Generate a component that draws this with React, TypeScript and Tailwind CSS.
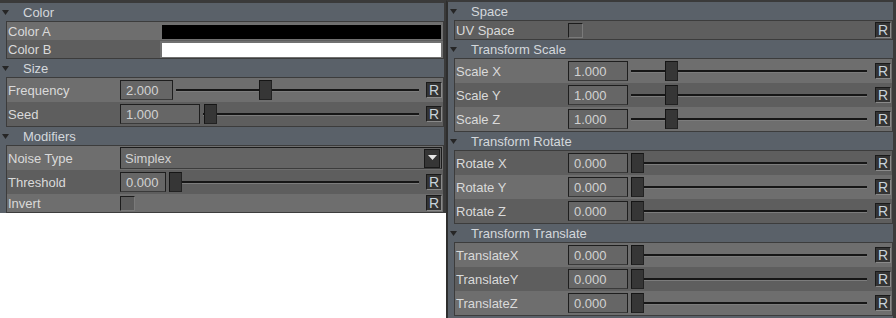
import React from "react";

type Tone = "light" | "dark";

type Row =
  | { kind: "color"; label: string; tone: Tone; swatch: string }
  | { kind: "slider"; label: string; tone: Tone; value: string; boxW: number; thumb: number }
  | { kind: "select"; label: string; tone: Tone; value: string }
  | { kind: "check"; label: string; tone: Tone };

type Section = { title: string; rows: Row[] };

const LEFT: Section[] = [
  {
    title: "Color",
    rows: [
      { kind: "color", label: "Color A", tone: "light", swatch: "bg-black" },
      { kind: "color", label: "Color B", tone: "dark", swatch: "bg-white" },
    ],
  },
  {
    title: "Size",
    rows: [
      { kind: "slider", label: "Frequency", tone: "light", value: "2.000", boxW: 53, thumb: 83 },
      { kind: "slider", label: "Seed", tone: "dark", value: "1.000", boxW: 80, thumb: 1 },
    ],
  },
  {
    title: "Modifiers",
    rows: [
      { kind: "select", label: "Noise Type", tone: "light", value: "Simplex" },
      { kind: "slider", label: "Threshold", tone: "dark", value: "0.000", boxW: 46, thumb: 0 },
      { kind: "check", label: "Invert", tone: "light" },
    ],
  },
];

const RIGHT: Section[] = [
  { title: "Space", rows: [{ kind: "check", label: "UV Space", tone: "dark" }] },
  {
    title: "Transform Scale",
    rows: [
      { kind: "slider", label: "Scale X", tone: "light", value: "1.000", boxW: 60, thumb: 34 },
      { kind: "slider", label: "Scale Y", tone: "dark", value: "1.000", boxW: 60, thumb: 34 },
      { kind: "slider", label: "Scale Z", tone: "light", value: "1.000", boxW: 60, thumb: 34 },
    ],
  },
  {
    title: "Transform Rotate",
    rows: [
      { kind: "slider", label: "Rotate X", tone: "dark", value: "0.000", boxW: 60, thumb: 0 },
      { kind: "slider", label: "Rotate Y", tone: "light", value: "0.000", boxW: 60, thumb: 0 },
      { kind: "slider", label: "Rotate Z", tone: "dark", value: "0.000", boxW: 60, thumb: 0 },
    ],
  },
  {
    title: "Transform Translate",
    rows: [
      { kind: "slider", label: "TranslateX", tone: "light", value: "0.000", boxW: 60, thumb: 0 },
      { kind: "slider", label: "TranslateY", tone: "dark", value: "0.000", boxW: 60, thumb: 0 },
      { kind: "slider", label: "TranslateZ", tone: "light", value: "0.000", boxW: 60, thumb: 0 },
    ],
  },
];

function ResetButton() {
  return (
    <div className="w-[16px] h-[16px] mr-[1px] shrink-0 flex items-center justify-center bg-[#343434] border border-[#1a1a1a] border-r-[#8a8a8a] border-b-[#8a8a8a] text-[14px] leading-none text-[#c9d3da]">
      R
    </div>
  );
}

function Checkbox() {
  return (
    <div className="w-[15px] h-[15px] bg-[#5c5c5c] border border-[#1c1c1c] border-r-[#7a7a7a] border-b-[#7a7a7a]" />
  );
}

function ValueBox({ value, width }: { value: string; width: number }) {
  return (
    <div
      className="h-[20px] shrink-0 flex items-center pl-[5px] bg-[#666666] border border-[#1e1e1e] border-b-[#3a3a3a] text-[#d2d2d2]"
      style={{ width }}
    >
      {value}
    </div>
  );
}

function SliderTrack({ thumb, gap }: { thumb: number; gap: number }) {
  return (
    <div className="relative flex-1 h-[20px] ml-[3px] flex items-center" style={{ marginRight: gap }}>
      <div className="w-full h-[3px] border-t-2 border-[#161616] border-b border-b-[#7c7c7c]" />
      {/* つまみ */}
      <div
        className="absolute top-0 w-[13px] h-[20px] bg-[#363636] border border-[#151515] border-r-[#222] border-b-[#222]"
        style={{ left: thumb }}
      />
    </div>
  );
}

function PropRow({ row, trackGap }: { row: Row; trackGap: number }) {
  const bg = row.tone === "light" ? "bg-[#6e6e6e]" : "bg-[#5e5e5e]";
  const tall = row.kind === "slider" || row.kind === "select";

  return (
    <div className={`flex items-center ${tall ? "h-[24px]" : "h-[18px]"} ${bg}`}>
      <div className="w-[113px] shrink-0 pl-[1px] text-[#dadada] whitespace-nowrap">{row.label}</div>

      {row.kind === "color" && (
        <div className="ml-auto self-end w-[283px] h-[17px] border-2 border-[#707070] border-b-[1px]">
          <div className={`w-full h-full ${row.swatch}`} />
        </div>
      )}

      {row.kind === "slider" && (
        <>
          <ValueBox value={row.value} width={row.boxW} />
          <SliderTrack thumb={row.thumb} gap={trackGap} />
          <ResetButton />
        </>
      )}

      {row.kind === "select" && (
        <div className="flex-1 h-[22px] mr-[1px] flex items-center pl-[4px] bg-[#646464] border border-[#1c1c1c] border-b-[#3c3c3c] text-[#d2d2d2]">
          <span className="flex-1">{row.value}</span>
          <div className="w-[16px] h-[19px] mr-[1px] flex items-center justify-center bg-[#363636] border border-[#1a1a1a]">
            <svg width="9" height="6" viewBox="0 0 9 6">
              <path d="M0 0H9L4.5 5Z" fill="#e8e8e8" />
            </svg>
          </div>
        </div>
      )}

      {row.kind === "check" && (
        <>
          <Checkbox />
          <div className="flex-1" />
          <ResetButton />
        </>
      )}
    </div>
  );
}

function SectionBlock({ section, trackGap }: { section: Section; trackGap: number }) {
  return (
    <div>
      {/* 見出し */}
      <div className="h-[18px] flex items-center text-[#d4d8dc]">
        <svg width="7" height="6" viewBox="0 0 7 6" className="ml-[2px] mt-[1px]">
          <path d="M0 0H7L3.5 5Z" fill="#262626" />
        </svg>
        <span className="ml-[14px] mt-[1px]">{section.title}</span>
      </div>
      {/* 行グループ */}
      <div className="ml-[6px] border border-[#3c3c3c]">
        {section.rows.map((row) => (
          <PropRow key={row.label} row={row} trackGap={trackGap} />
        ))}
      </div>
    </div>
  );
}

export default function App() {
  return (
    <div
      className="w-[896px] h-[318px] bg-white flex items-start overflow-hidden text-[13px] leading-none"
      style={{ fontFamily: '"Liberation Sans", Arial, sans-serif' }}
    >
      <div className="w-[446px] shrink-0 bg-[#5a6169] border-t-[3px] border-[#3a3a3a] border-r-2">
        {LEFT.map((s) => (
          <SectionBlock key={s.title} section={s} trackGap={7} />
        ))}
      </div>
      <div className="w-[450px] h-[318px] shrink-0 bg-[#5a6169] border-t-2 border-l-2 border-r-[3px] border-[#2e2e2e] border-r-[#3b3b3b] border-t-[#3a3a3a]">
        {RIGHT.map((s) => (
          <SectionBlock key={s.title} section={s} trackGap={8} />
        ))}
      </div>
    </div>
  );
}
